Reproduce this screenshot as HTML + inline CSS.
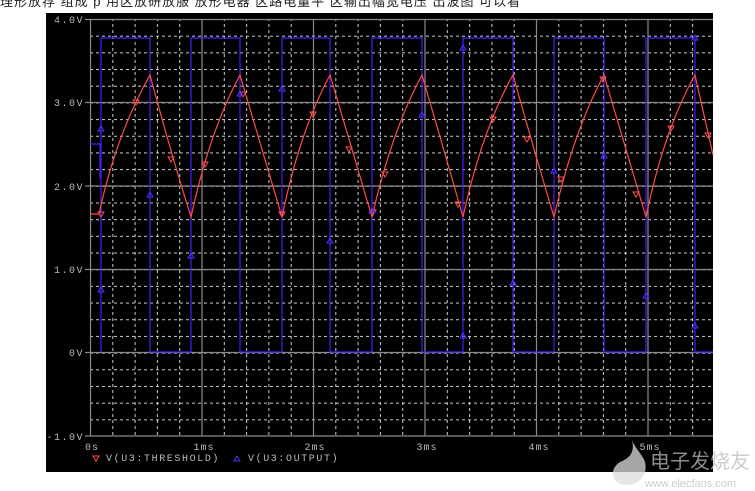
<!DOCTYPE html>
<html><head><meta charset="utf-8"><style>
body{margin:0;width:755px;height:491px;background:#fff;overflow:hidden;position:relative;font-family:"Liberation Sans","Noto Sans CJK SC",sans-serif}
.top{position:absolute;left:0;top:-9px;font-size:13px;color:#222;white-space:nowrap;letter-spacing:1px}
svg{position:absolute;left:0;top:0}
</style></head><body>
<div class="top">理形放荐 组成 p 用区放研放服 放形电器 区路电量平 区输出幅宽电压 出波图 可以看</div>
<svg width="755" height="491" font-family="Liberation Mono, monospace">
<defs>
<pattern id="mv" x="90" y="0" width="22.3" height="6" patternUnits="userSpaceOnUse"><rect x="0" y="0" width="1" height="3" fill="#ccc"/></pattern>
<pattern id="mh" x="0" y="19" width="6" height="16.68" patternUnits="userSpaceOnUse"><rect x="0" y="0" width="3" height="1" fill="#ccc"/></pattern>
</defs>
<rect x="46" y="13" width="667" height="459" fill="#000"/>
<rect x="90" y="19" width="623" height="417" fill="url(#mv)"/>
<rect x="90" y="19" width="623" height="417" fill="url(#mh)"/>
<g stroke="#8a8a8a" stroke-width="1.2">
<line x1="90" y1="19.5" x2="713" y2="19.5"/><line x1="90" y1="102.5" x2="713" y2="102.5"/>
<line x1="90" y1="186" x2="713" y2="186"/><line x1="90" y1="269.5" x2="713" y2="269.5"/>
<line x1="90" y1="352.5" x2="713" y2="352.5"/><line x1="90" y1="436" x2="713" y2="436"/>
<line x1="90.5" y1="19" x2="90.5" y2="436"/><line x1="202" y1="19" x2="202" y2="436"/>
<line x1="313.5" y1="19" x2="313.5" y2="436"/><line x1="425" y1="19" x2="425" y2="436"/>
<line x1="536.5" y1="19" x2="536.5" y2="436"/><line x1="648" y1="19" x2="648" y2="436"/>
<line x1="85" y1="19.5" x2="90" y2="19.5"/><line x1="85" y1="102.5" x2="90" y2="102.5"/><line x1="85" y1="186" x2="90" y2="186"/><line x1="85" y1="269.5" x2="90" y2="269.5"/><line x1="85" y1="352.5" x2="90" y2="352.5"/><line x1="85" y1="436" x2="90" y2="436"/>
</g>
<g fill="#bbb" font-size="10" text-anchor="end" letter-spacing="1.5">
<text x="84" y="23">4.0V</text><text x="84" y="106">3.0V</text><text x="84" y="190">2.0V</text><text x="84" y="273">1.0V</text><text x="84" y="356">0V</text><text x="84" y="440">-1.0V</text>
</g>
<g fill="#bbb" font-size="10" text-anchor="middle" letter-spacing="1">
<text x="92" y="450">0s</text><text x="204" y="450">1ms</text><text x="315" y="450">2ms</text><text x="427" y="450">3ms</text><text x="539" y="450">4ms</text><text x="650" y="450">5ms</text>
</g>
<g font-size="10" fill="#bbb" letter-spacing="1.6"><text x="106" y="461">V(U3:THRESHOLD)</text><text x="248" y="461">V(U3:OUTPUT)</text></g>
<path d="M93 456l3 5 3-5z" fill="none" stroke="#ff5050"/>
<path d="M234 461l3-5 3 5z" fill="none" stroke="#5030ff"/>
<path fill="none" stroke="#4a1cff" stroke-width="1.2" d="M90 144H100V178M101 352V38H150V352H191V38H240V352H282V38H330V352H372V38H422V352H463V38H513V352H554V38H604V352H646V38H695V352H713"/>
<path fill="none" stroke="#ff4a4a" stroke-width="1.2" d="M90 214L99 214Q116 135 150 75Q170 150 191 217Q210 130 240 75Q262 150 282 217Q300 130 330 75Q352 150 372 217Q392 130 422 75Q444 150 463 217Q482 130 513 75Q534 150 554 217Q574 130 604 75Q626 150 646 217Q664 130 695 75L713 155"/>
<g fill="none" stroke="#ff5050" stroke-width="1">
<path d="M98 212l3 5 3-5z"/><path d="M133 100l3 5 3-5z"/><path d="M168 157l3 5 3-5z"/><path d="M202 162l3 5 3-5z"/><path d="M240 92l3 5 3-5z"/><path d="M279 212l3 5 3-5z"/><path d="M310 112l3 5 3-5z"/><path d="M346 147l3 5 3-5z"/><path d="M370 210l3 5 3-5z"/><path d="M382 172l3 5 3-5z"/><path d="M455 202l3 5 3-5z"/><path d="M490 117l3 5 3-5z"/><path d="M524 137l3 5 3-5z"/><path d="M558 177l3 5 3-5z"/><path d="M600 77l3 5 3-5z"/><path d="M633 192l3 5 3-5z"/><path d="M668 126l3 5 3-5z"/><path d="M705 133l3 5 3-5z"/>
</g>
<g fill="none" stroke="#5030ff" stroke-width="1">
<path d="M98 131l3-5 3 5z"/><path d="M98 292l3-5 3 5z"/><path d="M147 197l3-5 3 5z"/><path d="M188 258l3-5 3 5z"/><path d="M237 96l3-5 3 5z"/><path d="M279 91l3-5 3 5z"/><path d="M327 243l3-5 3 5z"/><path d="M369 213l3-5 3 5z"/><path d="M419 117l3-5 3 5z"/><path d="M460 50l3-5 3 5z"/><path d="M460 338l3-5 3 5z"/><path d="M510 285l3-5 3 5z"/><path d="M551 173l3-5 3 5z"/><path d="M601 158l3-5 3 5z"/><path d="M643 298l3-5 3 5z"/><path d="M692 40l3-5 3 5z"/><path d="M692 328l3-5 3 5z"/>
</g>
<g opacity="0.75">
<path d="M632 440C635 452 630 458 620 462C608 470 612 484 625 485C640 486 648 474 645 462C643 455 636 450 632 440Z" fill="#ddd"/>
<text x="650" y="468" font-family="Noto Sans CJK SC,sans-serif" font-size="20" fill="#bbb">电子发烧友</text>
<text x="645" y="487" font-family="Liberation Sans,sans-serif" font-size="11" fill="#bbb">www.elecfans.com</text>
</g>
</svg>
</body></html>
